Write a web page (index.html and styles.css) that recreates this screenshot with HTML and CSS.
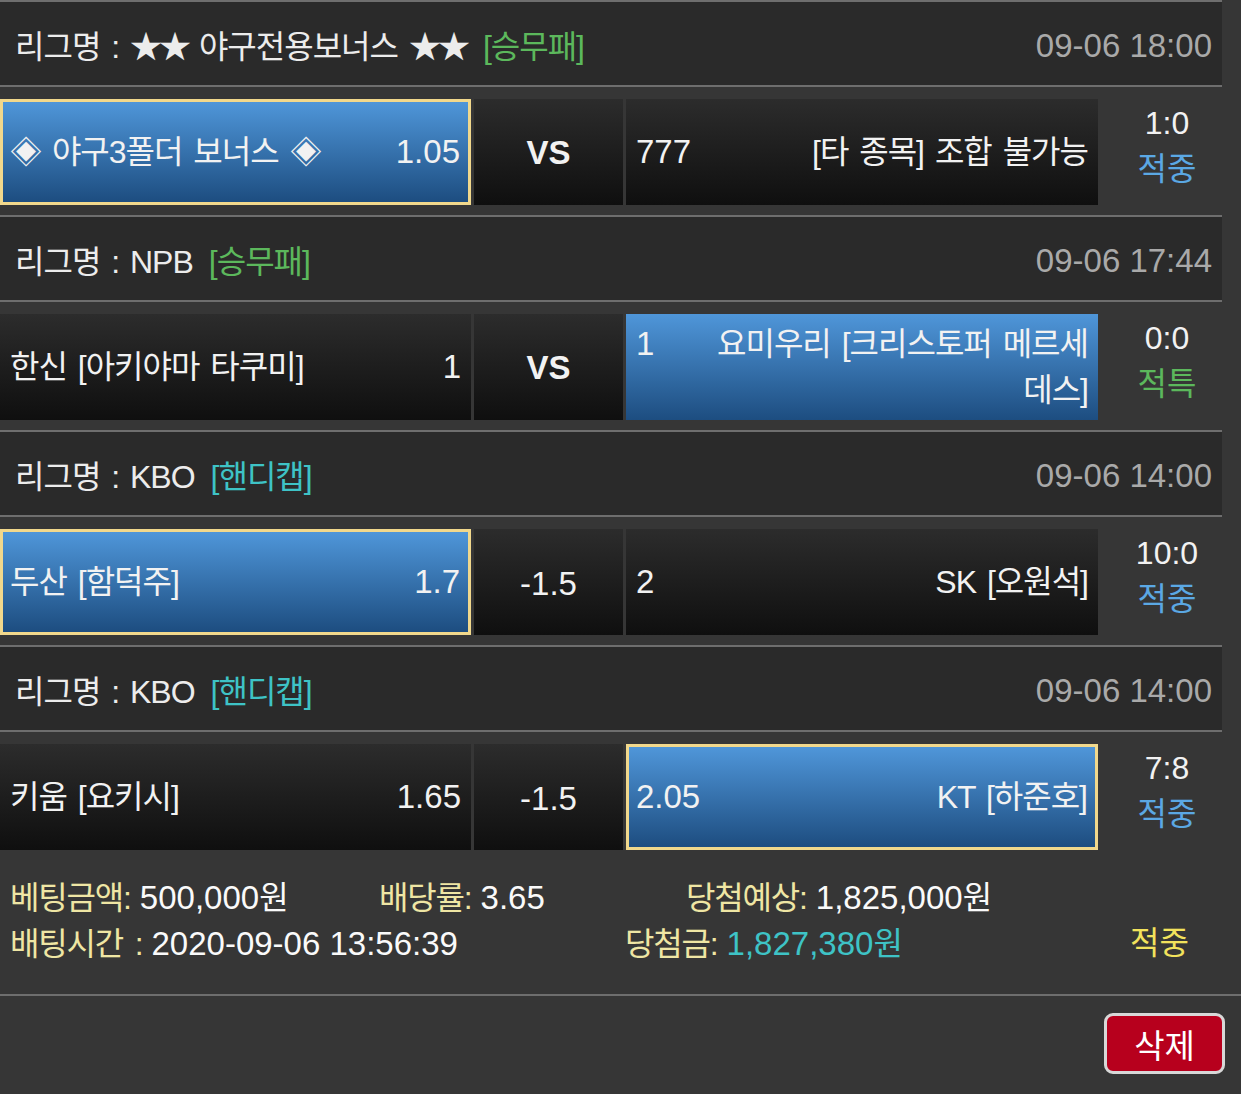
FILE: index.html
```html
<!DOCTYPE html>
<html lang="ko">
<head>
<meta charset="utf-8">
<title>베팅내역</title>
<link rel="stylesheet" href="styles.css">
</head>
<body>
<div class="list">
  <div class="league">
    <div class="league-name">리그명 : <span class="star">★★</span> 야구전용보너스 <span class="star">★★</span><span class="type green">[승무패]</span></div>
    <div class="date">09-06 18:00</div>
  </div>
  <div class="match">
    <div class="cell team home sel bordered"><div class="inner"><span class="odds">1.05</span><span class="name">◈ 야구3폴더 보너스 ◈</span></div></div>
    <div class="cell mid vs">VS</div>
    <div class="cell team away"><div class="inner"><span class="odds">777</span><span class="name">[타 종목] 조합 불가능</span></div></div>
    <div class="score"><div>1:0</div><div class="blue">적중</div></div>
  </div>

  <div class="league">
    <div class="league-name">리그명 : NPB<span class="type green">[승무패]</span></div>
    <div class="date">09-06 17:44</div>
  </div>
  <div class="match">
    <div class="cell team home"><div class="inner"><span class="odds">1</span><span class="name">한신 [아키야마 타쿠미]</span></div></div>
    <div class="cell mid vs">VS</div>
    <div class="cell team away sel"><div class="inner"><span class="odds">1</span><span class="name">요미우리 [크리스토퍼 메르세데스]</span></div></div>
    <div class="score"><div>0:0</div><div class="green">적특</div></div>
  </div>

  <div class="league">
    <div class="league-name">리그명 : KBO<span class="type teal">[핸디캡]</span></div>
    <div class="date">09-06 14:00</div>
  </div>
  <div class="match">
    <div class="cell team home sel bordered"><div class="inner"><span class="odds">1.7</span><span class="name">두산 [함덕주]</span></div></div>
    <div class="cell mid">-1.5</div>
    <div class="cell team away"><div class="inner"><span class="odds">2</span><span class="name">SK [오원석]</span></div></div>
    <div class="score"><div>10:0</div><div class="blue">적중</div></div>
  </div>

  <div class="league">
    <div class="league-name">리그명 : KBO<span class="type teal">[핸디캡]</span></div>
    <div class="date">09-06 14:00</div>
  </div>
  <div class="match">
    <div class="cell team home"><div class="inner"><span class="odds">1.65</span><span class="name">키움 [요키시]</span></div></div>
    <div class="cell mid">-1.5</div>
    <div class="cell team away sel bordered"><div class="inner"><span class="odds">2.05</span><span class="name">KT [하준호]</span></div></div>
    <div class="score"><div>7:8</div><div class="blue">적중</div></div>
  </div>
</div>

<div class="summary">
  <div class="sum-row">
    <div class="c1"><span class="lab">베팅금액:</span> 500,000<span class="won">원</span></div>
    <div class="c2"><span class="lab">배당률:</span> 3.65</div>
    <div><span class="lab">당첨예상:</span> 1,825,000<span class="won">원</span></div>
  </div>
  <div class="sum-row">
    <div class="d1"><span class="lab">배팅시간 :</span> 2020-09-06 13:56:39</div>
    <div class="d2"><span class="lab">당첨금:</span> <span class="teal">1,827,380<span class="won">원</span></span></div>
    <div class="yellow">적중</div>
  </div>
</div>

<div class="actions">
  <button class="del" type="button">삭제</button>
</div>
</body>
</html>
```

FILE: styles.css
```css
html, body {
  margin: 0;
  padding: 0;
}
body {
  background: #363636;
  color: #f2f2f2;
  font-family: "Liberation Sans", "Noto Sans CJK KR", sans-serif;
  font-size: 32px;
  min-height: 1094px;
}
.list {
  width: 1222px;
}
.league {
  box-sizing: border-box;
  height: 87px;
  border-top: 2px solid #6e6e6e;
  border-bottom: 2px solid #6e6e6e;
  background: #2a2a2a;
  display: flex;
  align-items: center;
  justify-content: space-between;
  padding: 0 10px 0 15px;
}
.league-name {
  color: #ececec;
  letter-spacing: -1px;
  word-spacing: 3px;
}
.star {
  letter-spacing: -3px;
}
.type {
  margin-left: 16px;
}
.date {
  color: #a9a9a9;
  font-size: 33px;
  padding-top: 4px;
}
.green { color: #5cb85c; }
.teal { color: #3ec3c6; }
.blue { color: #5ba8e4; }
.yellow { color: #f2e25c; }

.match {
  width: 1241px;
  display: flex;
  padding: 12px 0 10px;
  box-sizing: border-box;
  height: 128px;
}
.cell {
  box-sizing: border-box;
  height: 106px;
  background: linear-gradient(#2c2c2c, #0f0f0f);
  display: flex;
  align-items: center;
}
.team {
  width: 471px;
  padding: 0 10px;
}
.away {
  width: 472px;
  margin-left: 3px;
}
.mid {
  width: 149px;
  margin-left: 3px;
  justify-content: center;
  font-size: 33px;
  padding-top: 4px;
}
.vs {
  font-weight: bold;
  font-size: 33px;
  padding-top: 2px;
}
.inner {
  width: 100%;
  line-height: 46px;
}
.name {
  letter-spacing: -1px;
  word-spacing: 3px;
}
.odds {
  font-size: 33px;
}
.home .odds {
  float: right;
}
.away .odds {
  float: left;
  margin-right: 60px;
}
.away .name {
  display: block;
  text-align: right;
}
.sel {
  background: linear-gradient(#4f96d9, #1d4d80);
}
.bordered {
  border: 3px solid #f1d88c;
  padding: 0 8px 0 7px;
}
.score {
  width: 138px;
  text-align: center;
  line-height: 46px;
  padding-top: 1px;
}

.summary {
  border-bottom: 2px solid #6e6e6e;
  padding: 15px 0 27px 10px;
}
.sum-row {
  display: flex;
  line-height: 45px;
  color: #fafafa;
  font-size: 33px;
}
.lab {
  color: #efe6a4;
  letter-spacing: -1.2px;
  word-spacing: 4px;
  font-size: 32px;
}
.won {
  font-size: 32px;
}
.c1 { width: 369px; }
.c2 { width: 307px; }
.d1 { width: 615px; }
.d2 { width: 505px; }
.sum-row .yellow {
  font-size: 32px;
}

.actions {
  display: flex;
  justify-content: flex-end;
  padding: 17px 16px 0 0;
}
.del {
  box-sizing: border-box;
  width: 121px;
  height: 61px;
  background: #b7001d;
  border: 3px solid #d8d8d8;
  border-radius: 9px;
  color: #ffffff;
  font-family: "Liberation Sans", "Noto Sans CJK KR", sans-serif;
  font-size: 33px;
  padding: 0;
}
```
